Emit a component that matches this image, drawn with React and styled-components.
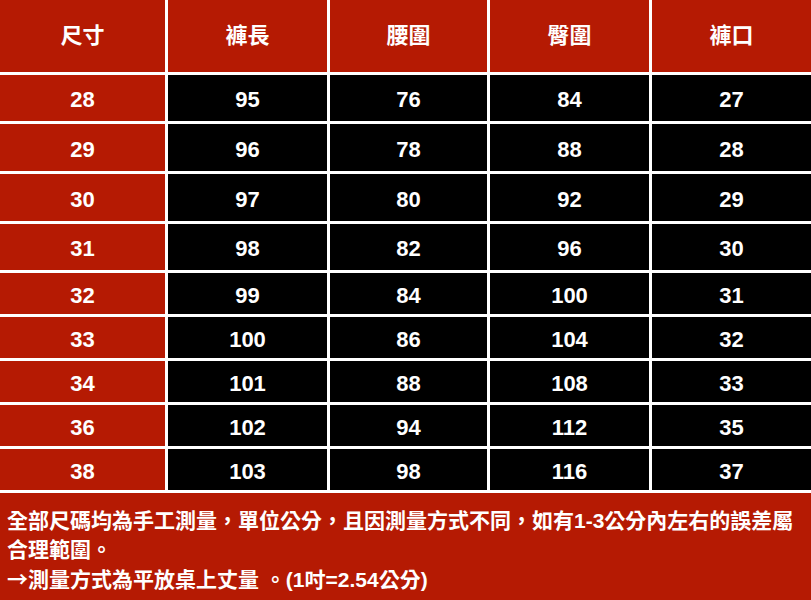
import React from "react";
import styled, { createGlobalStyle } from "styled-components";

const Global = createGlobalStyle`
  html, body { margin: 0; padding: 0; background: #ffffff; }
  body { font-family: "Liberation Sans", "Noto Sans CJK TC", sans-serif; }
`;

const RED = "#b51a03";

const Page = styled.div`
  width: 811px;
  display: flex;
  flex-direction: column;
  background: #ffffff;
`;

const Sheet = styled.div`
  display: flex;
  flex-direction: column;
  gap: 3px;
  padding-bottom: 3px;
  background: #ffffff;
`;

const Row = styled.div`
  display: grid;
  grid-template-columns: 165px 159px 157px 159px 159px;
  column-gap: 3px;
  height: ${(p) => p.$h}px;
`;

const Cell = styled.div`
  display: flex;
  align-items: center;
  justify-content: center;
  background: ${(p) => (p.$dark ? "#000000" : RED)};
  color: #ffffff;
  font-family: "Liberation Sans", "Noto Sans CJK TC", sans-serif;
  font-weight: 700;
  font-size: 22px;
  line-height: 1;
  padding-top: 4px;
`;

const HeadCell = styled(Cell)`
  font-family: "Liberation Sans", "Noto Sans CJK TC", sans-serif;
  font-weight: 700;
  font-size: 22px;
  padding-top: 0;
`;

const Footer = styled.div`
  background: ${RED};
  color: #ffffff;
  padding: 13px 0 10px 7px;
  font-family: "Liberation Sans", "Noto Sans CJK TC", sans-serif;
  font-weight: 700;
  font-size: 21px;
  line-height: 29px;
`;

const Line = styled.div`
  white-space: nowrap;
`;

const Arrow = styled.span`
  font-family: "Noto Sans CJK TC", sans-serif;
`;

const headers = ["尺寸", "褲長", "腰圍", "臀圍", "褲口"];
const rows = [
  { v: ["28", "95", "76", "84", "27"], h: 46 },
  { v: ["29", "96", "78", "88", "28"], h: 47 },
  { v: ["30", "97", "80", "92", "29"], h: 47 },
  { v: ["31", "98", "82", "96", "30"], h: 46 },
  { v: ["32", "99", "84", "100", "31"], h: 41 },
  { v: ["33", "100", "86", "104", "32"], h: 41 },
  { v: ["34", "101", "88", "108", "33"], h: 41 },
  { v: ["36", "102", "94", "112", "35"], h: 41 },
  { v: ["38", "103", "98", "116", "37"], h: 41 },
];

export default function App() {
  return (
    <Page>
      <Global />
      <Sheet>
        <Row $h={72}>
          {headers.map((t) => (
            <HeadCell key={t}>{t}</HeadCell>
          ))}
        </Row>
        {rows.map((r) => (
          <Row key={r.v[0]} $h={r.h}>
            {r.v.map((t, i) => (
              <Cell key={i} $dark={i > 0}>
                {t}
              </Cell>
            ))}
          </Row>
        ))}
      </Sheet>
      <Footer>
        <Line>全部尺碼均為手工測量，單位公分，且因測量方式不同，如有1-3公分內左右的誤差屬</Line>
        <Line>合理範圍。</Line>
        <Line>
          <Arrow>→</Arrow>測量方式為平放桌上丈量 。(1吋=2.54公分)
        </Line>
      </Footer>
    </Page>
  );
}
